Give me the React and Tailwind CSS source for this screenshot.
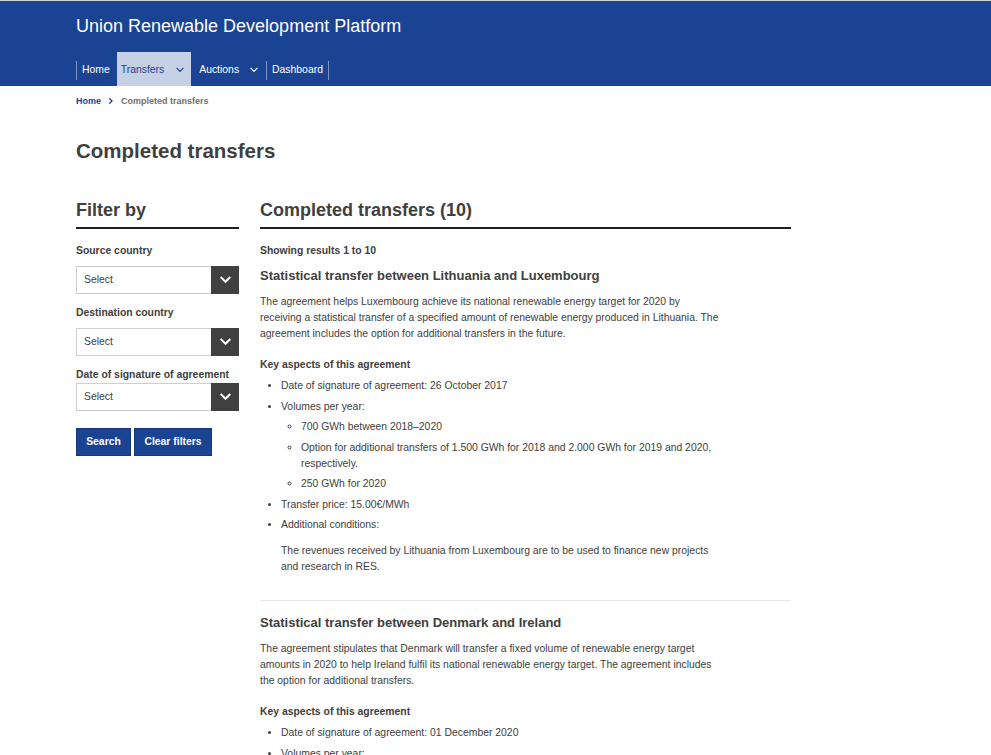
import React from "react";

const Chevron = ({ className = "", stroke = "currentColor", width = 2 }) => (
  <svg viewBox="0 0 12 8" className={className} fill="none">
    <path d="M1.5 1.5 6 6l4.5-4.5" stroke={stroke} strokeWidth={width} strokeLinecap="square" />
  </svg>
);

function SelectBox({ className = "" }) {
  return (
    <div className={`flex h-[28px] border border-[#cfcfcf] bg-white ${className}`}>
      <div className="flex flex-1 items-center pl-[7px] text-[10.4px] text-[#404040]">Select</div>
      <div className="flex w-[28px] -my-px -mr-px items-center justify-center bg-[#404040]">
        <Chevron className="w-[11px] h-[8px]" stroke="#fff" width={2.2} />
      </div>
    </div>
  );
}

function Transfer({ title, intro, date, volumes, price, conditions, first }) {
  return (
    <section className={first ? "" : "mt-[25px] border-t border-[#e6e6e6] pt-[13px]"}>
      <h3 className={`${first ? "mt-[9px]" : ""} text-[13px] leading-[18px] font-bold text-[#404040]`}>{title}</h3>
      <p className="mt-[9px] max-w-[462px] text-[10.4px] leading-[16px]">{intro}</p>
      <div className="mt-[15px] text-[10.4px] leading-[16px] font-bold">Key aspects of this agreement</div>
      <ul className="list-disc pl-[21px] text-[10.4px] leading-[16px]">
        <li className="mt-[5px]">Date of signature of agreement: {date}</li>
        <li className="mt-[4.5px]">
          Volumes per year:
          {volumes && (
            <ul className="list-[circle] pl-[20px]">
              {volumes.map((v) => (
                <li key={v} className="mt-[4.5px] max-w-[425px]">{v}</li>
              ))}
            </ul>
          )}
        </li>
        {price && <li className="mt-[4.5px]">Transfer price: {price}</li>}
        {conditions && (
          <li className="mt-[4.5px]">
            Additional conditions:
            <p className="mt-[10px] max-w-[434px]">{conditions}</p>
          </li>
        )}
      </ul>
    </section>
  );
}

export default function App() {
  return (
    <div className="min-h-screen bg-white text-[#404040] font-['Liberation_Sans',Arial,sans-serif]">
      <header className="h-[86px] border-t border-[#cfd3da] bg-[#1b4393] pl-[76px]">
        <div className="pt-[13px] text-[18px] leading-[24px] text-white">Union Renewable Development Platform</div>
        <nav className="mt-[14px] flex h-[34px] pt-[2px] text-[10.4px] text-white">
          <div className="flex items-center">
            <span className="h-[19px] w-px bg-[#7d93c0]" />
          </div>
          <a className="flex items-center pl-[5px] pr-[7px]">Home</a>
          <a className="-mt-[2px] flex items-center gap-[12px] bg-[#c5d0e4] pt-[2px] pl-[4px] pr-[7px] text-[#1b4393]">
            Transfers
            <Chevron className="w-[8px] h-[6px]" width={1.8} />
          </a>
          <a className="flex items-center gap-[11px] pl-[8px] pr-[8px]">
            Auctions
            <Chevron className="w-[8px] h-[6px]" width={1.8} />
          </a>
          <div className="flex items-center">
            <span className="h-[19px] w-px bg-[#7d93c0]" />
          </div>
          <a className="flex items-center pl-[5px] pr-[5px]">Dashboard</a>
          <div className="flex items-center">
            <span className="h-[19px] w-px bg-[#7d93c0]" />
          </div>
        </nav>
      </header>

      <main className="pl-[76px]">
        <div className="mt-[8px] flex items-center gap-[7px] text-[9px] leading-[14px] font-bold">
          <a className="text-[#1b4393]">Home</a>
          <Chevron className="w-[6px] h-[8px] -rotate-90 text-[#1b4393]" width={2.6} />
          <span className="text-[#6f6f6f]">Completed transfers</span>
        </div>

        <h1 className="mt-[31px] text-[20.5px] leading-[24px] font-bold">Completed transfers</h1>

        <div className="mt-[36px] flex gap-[21px]">
          <aside className="w-[163px] shrink-0">
            <h2 className="border-b-2 border-[#1f1f1f] pb-[6px] text-[18px] leading-[22px] font-bold">Filter by</h2>
            <div className="mt-[15px] text-[10.4px] leading-[14px] font-bold">Source country</div>
            <SelectBox className="mt-[8px]" />
            <div className="mt-[12px] text-[10.4px] leading-[14px] font-bold">Destination country</div>
            <SelectBox className="mt-[8px]" />
            <div className="mt-[12px] text-[10.4px] leading-[14px] font-bold">Date of signature of agreement</div>
            <SelectBox className="mt-px" />
            <div className="mt-[17px] flex gap-[3px]">
              <button className="h-[28px] w-[55px] border border-[#17387c] bg-[#1b4393] text-[10.4px] font-bold text-white">Search</button>
              <button className="h-[28px] w-[78px] border border-[#17387c] bg-[#1b4393] text-[10.4px] font-bold text-white">Clear filters</button>
            </div>
          </aside>

          <div className="w-[531px]">
            <h2 className="border-b-2 border-[#1f1f1f] pb-[6px] text-[18px] leading-[22px] font-bold">Completed transfers (10)</h2>
            <div className="mt-[15px] text-[10.4px] leading-[14px] font-bold">Showing results 1 to 10</div>

            <Transfer
              first
              title="Statistical transfer between Lithuania and Luxembourg"
              intro="The agreement helps Luxembourg achieve its national renewable energy target for 2020 by receiving a statistical transfer of a specified amount of renewable energy produced in Lithuania. The agreement includes the option for additional transfers in the future."
              date="26 October 2017"
              volumes={[
                "700 GWh between 2018–2020",
                "Option for additional transfers of 1.500 GWh for 2018 and 2.000 GWh for 2019 and 2020, respectively.",
                "250 GWh for 2020",
              ]}
              price="15.00€/MWh"
              conditions="The revenues received by Lithuania from Luxembourg are to be used to finance new projects and research in RES."
            />

            <Transfer
              title="Statistical transfer between Denmark and Ireland"
              intro="The agreement stipulates that Denmark will transfer a fixed volume of renewable energy target amounts in 2020 to help Ireland fulfil its national renewable energy target. The agreement includes the option for additional transfers."
              date="01 December 2020"
              volumes={["100 MWh for 2020"]}
              price="5.00€/MWh"
            />
          </div>
        </div>
      </main>
    </div>
  );
}
